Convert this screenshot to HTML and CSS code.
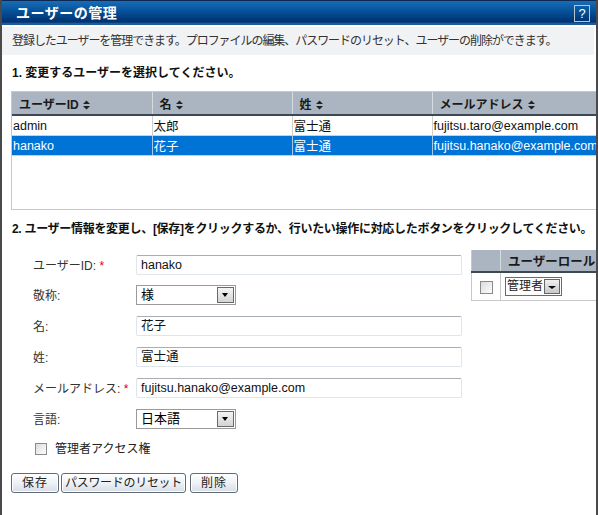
FILE: index.html
```html
<!DOCTYPE html>
<html lang="ja">
<head>
<meta charset="utf-8">
<title>ユーザーの管理</title>
<link rel="stylesheet" href="styles.css">
</head>
<body>
<div class="window">
  <div class="titlebar">
    <span class="title">ユーザーの管理</span>
    <span class="help">?</span>
  </div>
  <div class="desc">登録したユーザーを管理できます。プロファイルの編集、パスワードのリセット、ユーザーの削除ができます。</div>

  <div class="heading h1">1. 変更するユーザーを選択してください。</div>

  <div class="usertable-box">
    <table class="usertable">
      <colgroup><col class="c1"><col class="c2"><col class="c3"><col class="c4"></colgroup>
      <thead>
        <tr>
          <th>ユーザーID <svg class="sort" width="7" height="10" viewBox="0 0 7 10"><path d="M0 4L3.5 0.5L7 4Z M0 6L3.5 9.5L7 6Z" fill="#222"/></svg></th>
          <th>名 <svg class="sort" width="7" height="10" viewBox="0 0 7 10"><path d="M0 4L3.5 0.5L7 4Z M0 6L3.5 9.5L7 6Z" fill="#222"/></svg></th>
          <th>姓 <svg class="sort" width="7" height="10" viewBox="0 0 7 10"><path d="M0 4L3.5 0.5L7 4Z M0 6L3.5 9.5L7 6Z" fill="#222"/></svg></th>
          <th>メールアドレス <svg class="sort" width="7" height="10" viewBox="0 0 7 10"><path d="M0 4L3.5 0.5L7 4Z M0 6L3.5 9.5L7 6Z" fill="#222"/></svg></th>
        </tr>
      </thead>
      <tbody>
        <tr><td>admin</td><td>太郎</td><td>富士通</td><td>fujitsu.taro@example.com</td></tr>
        <tr class="selected"><td>hanako</td><td>花子</td><td>富士通</td><td>fujitsu.hanako@example.com</td></tr>
      </tbody>
    </table>
  </div>

  <div class="heading h2">2. ユーザー情報を変更し、[保存]をクリックするか、行いたい操作に対応したボタンをクリックしてください。</div>

  <div class="edit">
    <div class="form">
      <div class="label">ユーザーID: <span class="req">*</span></div>
      <div class="field"><div class="input">hanako</div></div>

      <div class="label">敬称:</div>
      <div class="field"><div class="select">様<span class="arrow"></span></div></div>

      <div class="label">名:</div>
      <div class="field"><div class="input">花子</div></div>

      <div class="label">姓:</div>
      <div class="field"><div class="input">富士通</div></div>

      <div class="label">メールアドレス: <span class="req">*</span></div>
      <div class="field"><div class="input">fujitsu.hanako@example.com</div></div>

      <div class="label">言語:</div>
      <div class="field"><div class="select">日本語<span class="arrow"></span></div></div>
    </div>

    <table class="roles">
      <thead><tr><th class="rc"></th><th class="rn">ユーザーロール</th></tr></thead>
      <tbody><tr><td class="rc"><span class="cbox"></span></td><td class="rn"><span class="rsel">管理者<span class="rarrow"></span></span></td></tr></tbody>
    </table>
  </div>

  <div class="admin"><span class="cbox"></span>管理者アクセス権</div>

  <div class="buttons">
    <span class="btn b1">保存</span>
    <span class="btn b2">パスワードのリセット</span>
    <span class="btn b3">削除</span>
  </div>
</div>
</body>
</html>
```

FILE: styles.css
```css
html, body {
  margin: 0;
  padding: 0;
  background: #ffffff;
}
body {
  font-family: "Liberation Sans", "Noto Sans CJK JP", sans-serif;
  font-size: 12px;
  color: #222;
}
.window {
  width: 598px;
  height: 515px;
  box-sizing: border-box;
  border-left: 2px solid #4a4a4a;
  border-right: 2px solid #4a4a4a;
  overflow: hidden;
  position: relative;
}
.titlebar {
  height: 25px;
  box-sizing: border-box;
  border-top: 1px solid #0a2a55;
  background: linear-gradient(to bottom, #1a6db5 0%, #0a5aa3 30%, #003a7c 75%, #00326c 88%, #1c5c9c 92%, #1c5c9c 100%);
  display: flex;
  align-items: center;
  justify-content: space-between;
  padding: 0 6px 0 14px;
}
.title {
  color: #fff;
  font-weight: bold;
  font-size: 14px;
  letter-spacing: 0.5px;
  line-height: 16px;
}
.help {
  width: 14px;
  height: 15px;
  border: 1px solid #b8c4d0;
  color: #fff;
  font-size: 13px;
  line-height: 15px;
  text-align: center;
  font-family: "Liberation Sans", sans-serif;
}
.desc {
  margin-top: 2px;
  margin-right: 2px;
  height: 28px;
  line-height: 28px;
  background: #f1f2f4;
  padding-left: 10px;
  color: #333;
  letter-spacing: -1.05px;
  white-space: nowrap;
}
.heading {
  font-weight: bold;
  line-height: 16px;
  padding-left: 10px;
  white-space: nowrap;
  color: #111;
}
.h1 { margin-top: 10px; }
.h2 { margin-top: 11px; letter-spacing: -0.3px; }

.usertable-box {
  margin: 10px 0 0 9px;
  width: 620px;
  height: 119px;
  box-sizing: border-box;
  border: 1px solid #c8c8c8;
}
.usertable {
  border-collapse: collapse;
  table-layout: fixed;
  width: 610px;
}
.usertable col.c1, .usertable col.c2, .usertable col.c3 { width: 140px; }
.usertable col.c4 { width: 190px; }
.usertable th {
  background: #aab5c1;
  height: 22px;
  padding: 0 0 0 7px;
  text-align: left;
  font-weight: bold;
  font-size: 12px;
  border-right: 1px solid #d6dbe0;
  border-bottom: 2px solid #3d4853;
  white-space: nowrap;
  color: #1a1a1a;
}
.sort { vertical-align: -1px; margin-left: 1px; }
.usertable td {
  height: 19px;
  padding: 0 0 0 1px;
  border-right: 1px solid #cfcfcf;
  border-bottom: 1px solid #cfcfcf;
  white-space: nowrap;
  font-size: 12.5px;
  color: #111;
}
.usertable tr.selected td {
  background: #0073d6;
  color: #fff;
  border-right-color: #a9c9ea;
}

.edit {
  display: flex;
  align-items: flex-start;
  margin-top: 13px;
}
.form {
  margin-left: 31px;
  width: 428px;
  display: grid;
  grid-template-columns: 103px 326px;
  grid-template-rows: 29px repeat(5, 31px);
  align-items: center;
}
.label {
  color: #333;
  white-space: nowrap;
}
.req { color: #e00000; }
.input {
  height: 20px;
  box-sizing: border-box;
  border: 1px solid #dfe5ea;
  border-top-color: #a8aeb4;
  border-radius: 2px;
  padding-left: 4px;
  line-height: 18px;
  font-size: 12.5px;
  color: #111;
  white-space: nowrap;
}
.select {
  width: 100px;
  height: 20px;
  box-sizing: border-box;
  border: 1px solid #9a9a9a;
  background: #fff;
  padding-left: 4px;
  line-height: 18px;
  font-size: 13px;
  color: #000;
  position: relative;
}
.arrow {
  position: absolute;
  right: 1px;
  top: 1px;
  width: 15px;
  height: 14px;
  border: 1px solid #6a6a6a;
  background: linear-gradient(to bottom, #f4f4f4, #d4d4d4);
}
.arrow::after {
  content: "";
  position: absolute;
  left: 4px;
  top: 5px;
  border-left: 3.5px solid transparent;
  border-right: 3.5px solid transparent;
  border-top: 4px solid #000;
}

.roles {
  margin-left: 10px;
  border-collapse: collapse;
  table-layout: fixed;
  width: 200px;
  flex: none;
  border-left: 1px solid #c8c8c8;
}
.roles th {
  background: #aab5c1;
  height: 21px;
  border-bottom: 2px solid #3d4853;
  text-align: left;
  font-size: 12.5px;
  font-weight: bold;
  padding: 0;
  white-space: nowrap;
  color: #1a1a1a;
}
.roles .rc { width: 28px; border-right: 1px solid #d6dbe0; }
.roles th.rn { padding-left: 7px; }
.roles td {
  height: 27px;
  border-bottom: 1px solid #c8c8c8;
  padding: 0;
  vertical-align: middle;
}
.roles td.rc { text-align: center; border-right: 1px solid #c8c8c8; }
.roles td.rn { padding-left: 4px; }
.cbox {
  display: inline-block;
  width: 11px;
  height: 11px;
  border: 1px solid #8a8a8a;
  background: linear-gradient(135deg, #dcdcdc, #fdfdfd);
  vertical-align: middle;
}
.rsel {
  display: inline-block;
  position: relative;
  width: 57px;
  height: 19px;
  box-sizing: border-box;
  border: 1px solid #6a6a6a;
  padding-left: 1px;
  line-height: 17px;
  font-size: 12px;
  vertical-align: middle;
}
.rarrow {
  position: absolute;
  right: 1px;
  top: 1px;
  width: 14px;
  height: 13px;
  border: 1px solid #666;
  background: linear-gradient(to bottom, #f0f0f0, #c8c8c8);
}
.rarrow::after {
  content: "";
  position: absolute;
  left: 3px;
  top: 6px;
  border-left: 4px solid transparent;
  border-right: 4px solid transparent;
  border-top: 3px solid #000;
}

.admin {
  margin: 8px 0 0 33px;
  height: 14px;
  line-height: 14px;
  display: flex;
  align-items: center;
  gap: 8px;
  color: #222;
}
.admin .cbox { width: 10px; height: 10px; }

.buttons {
  margin: 17px 0 0 9px;
  display: flex;
  gap: 2px;
}
.btn {
  height: 20px;
  box-sizing: border-box;
  border: 1px solid #5f6b78;
  border-radius: 3px;
  background: linear-gradient(to bottom, #ffffff 0%, #eef1f5 50%, #d6dde6 100%);
  box-shadow: inset 0 0 0 1px #ffffff;
  text-align: center;
  line-height: 18px;
  color: #222;
}
.b1 { width: 48px; letter-spacing: 1px; }
.b2 { width: 125px; letter-spacing: -0.3px; }
.b3 { width: 48px; margin-left: 2px; letter-spacing: 1px; }
```
